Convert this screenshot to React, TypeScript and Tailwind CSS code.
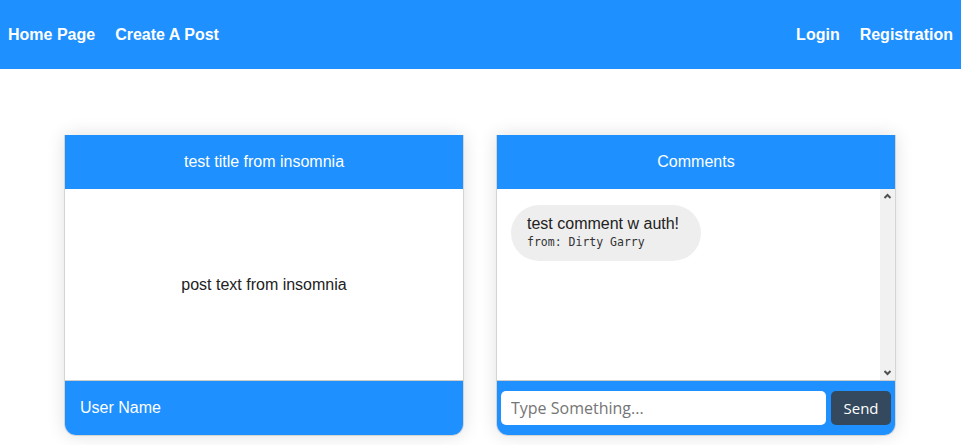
import React from 'react';

const App: React.FC = () => {
  return (
    <div className="min-h-[445px] bg-white font-['Liberation_Sans',Arial,sans-serif]">
      {/* Navbar */}
      <nav className="h-[69px] bg-[#1e90ff] flex items-center justify-between px-2 text-white font-bold text-base">
        <div className="flex gap-5">
          <a>Home Page</a>
          <a>Create A Post</a>
        </div>
        <div className="flex gap-5">
          <a>Login</a>
          <a>Registration</a>
        </div>
      </nav>

      {/* Cards */}
      <div className="flex gap-8 pl-[64px] pt-[66px]">
        {/* Post card */}
        <div className="w-[400px] h-[301px] flex flex-col border-x border-b border-[#d4d4d4] rounded-b-xl shadow-[0_0_18px_rgba(0,0,0,0.12)] overflow-hidden">
          <div className="h-[54px] -mx-px bg-[#1e90ff] text-white flex items-center justify-center">
            test title from insomnia
          </div>
          <div className="flex-1 flex items-center justify-center text-[#222] border-b border-[#ccc]">
            post text from insomnia
          </div>
          <div className="h-[54px] bg-[#1e90ff] text-white flex items-center px-[15px]">
            User Name
          </div>
        </div>

        {/* Comments card */}
        <div className="w-[400px] h-[301px] flex flex-col border-x border-b border-[#d4d4d4] rounded-b-xl shadow-[0_0_18px_rgba(0,0,0,0.12)] overflow-hidden">
          <div className="h-[54px] -mx-px bg-[#1e90ff] text-white flex items-center justify-center">
            Comments
          </div>
          <div className="flex-1 flex border-b border-[#ccc] min-h-0">
            <div className="flex-1 px-[14px] py-4">
              <div className="inline-flex flex-col bg-[#eeeeee] rounded-full pl-4 pr-[22px] pt-[9px] pb-[11px]">
                <span className="text-[#222] leading-5">test comment w auth!</span>
                <span className="text-[11.5px] text-[#333] font-['DejaVu_Sans_Mono',monospace] leading-4">
                  from: Dirty Garry
                </span>
              </div>
            </div>
            {/* scrollbar */}
            <div className="w-[15px] bg-[#f1f1f1] flex flex-col justify-between items-center py-[3px]">
              <svg width="9" height="9" viewBox="0 0 9 9">
                <path d="M1.5 6 L4.5 3 L7.5 6" fill="none" stroke="#505050" strokeWidth="2" />
              </svg>
              <svg width="9" height="9" viewBox="0 0 9 9">
                <path d="M1.5 3 L4.5 6 L7.5 3" fill="none" stroke="#505050" strokeWidth="2" />
              </svg>
            </div>
          </div>
          <div className="h-[54px] bg-[#1e90ff] flex items-center gap-[5px] px-1">
            <input
              type="text"
              placeholder="Type Something..."
              className="flex-1 h-[34px] rounded-[5px] bg-white px-[10px] text-base outline-none placeholder:text-[#757575] font-['Open_Sans',sans-serif]"
            />
            <button className="w-[60px] h-[34px] rounded-[5px] bg-[#34495e] text-white text-[15px] font-['Open_Sans',sans-serif]">
              Send
            </button>
          </div>
        </div>
      </div>
    </div>
  );
};

export default App;
